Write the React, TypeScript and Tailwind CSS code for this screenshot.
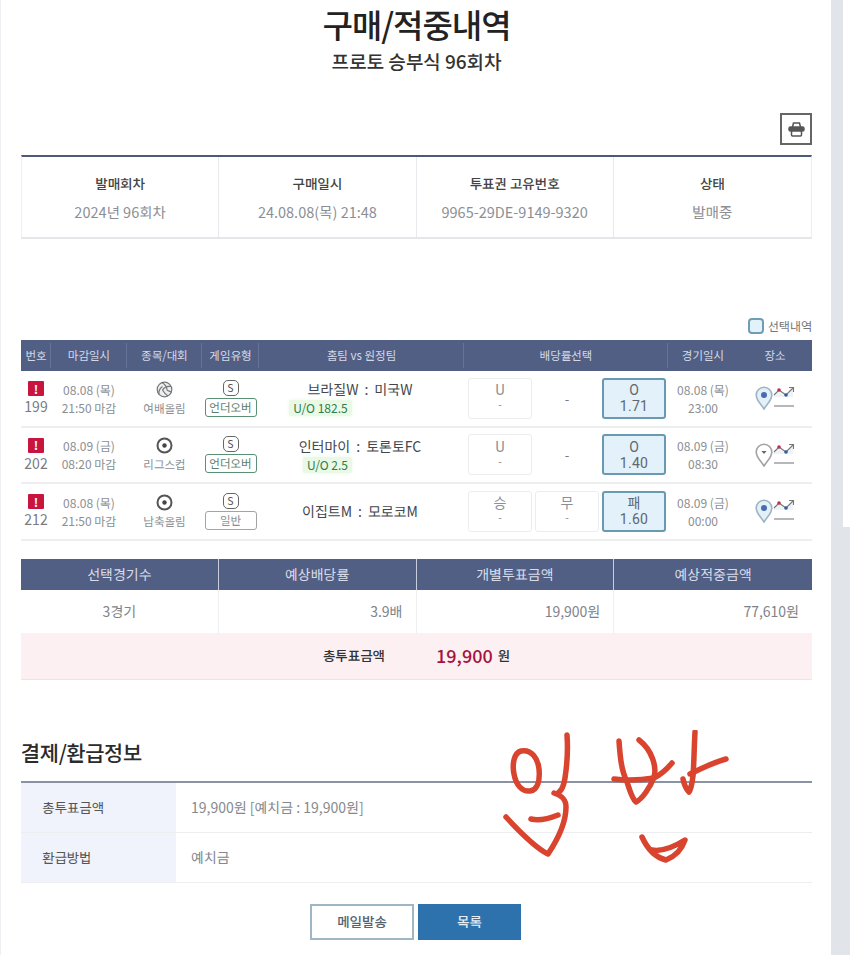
import { ReactNode } from "react";

const COLS = "grid grid-cols-[30px_76px_75px_57px_205px_204px_70px_74px]";
const KR = "font-['Noto_Sans_KR','Noto_Sans_CJK_KR','Noto_Sans',sans-serif]";

interface Game {
  no: number;
  closeDate: string;
  closeTime: string;
  league: string;
  ball: "volley" | "soccer";
  type: string;
  home: string;
  away: string;
  uo?: string;
  uoClass?: string;
  left: string;
  middle?: string;
  pick: string;
  odds: string;
  gameDate: string;
  gameTime: string;
  pinOn: boolean;
}

const games: Game[] = [
  { no: 199, closeDate: "08.08 (목)", closeTime: "21:50 마감", league: "여배올림", ball: "volley", type: "언더오버", home: "브라질W", away: "미국W", uo: "U/O 182.5", uoClass: "ml-[-82px]", left: "U", pick: "O", odds: "1.71", gameDate: "08.08 (목)", gameTime: "23:00", pinOn: true },
  { no: 202, closeDate: "08.09 (금)", closeTime: "08:20 마감", league: "리그스컵", ball: "soccer", type: "언더오버", home: "인터마이", away: "토론토FC", uo: "U/O 2.5", uoClass: "ml-[-68px]", left: "U", pick: "O", odds: "1.40", gameDate: "08.09 (금)", gameTime: "08:30", pinOn: false },
  { no: 212, closeDate: "08.08 (목)", closeTime: "21:50 마감", league: "남축올림", ball: "soccer", type: "일반", home: "이집트M", away: "모로코M", left: "승", middle: "무", pick: "패", odds: "1.60", gameDate: "08.09 (금)", gameTime: "00:00", pinOn: true },
];

function BallIcon({ kind }: { kind: "volley" | "soccer" }) {
  if (kind === "soccer") {
    return (
      <svg width="17" height="17" viewBox="0 0 17 17" fill="none">
        <circle cx="8.5" cy="8.5" r="7" stroke="#555" strokeWidth="2" />
        <circle cx="8.5" cy="8.5" r="2.2" fill="#444" />
      </svg>
    );
  }
  return (
    <svg width="17" height="17" viewBox="0 0 17 17" fill="#eceef0" stroke="#777" strokeWidth="1.2">
      <circle cx="8.5" cy="8.5" r="7.3" />
      <path fill="none" d="M6 1.800c3 1.500 5 4 5 7.500M15 5.500c-3-.5-6.500 .5-8.500 3.500M3 13.500c-.5-3 .5-6 3.500-8" />
      <path fill="none" d="M11 9.300c2 1 3.500 1.500 4.500 1.500M6.500 9c1.500 2.500 3 4.500 5.500 6" />
    </svg>
  );
}

function PinIcon({ on }: { on: boolean }) {
  return (
    <svg width="18" height="24" viewBox="0 0 18 24" fill="none">
      <path d="M9 23 C6 18 1.200 14.500 1.200 9 a7.800 7.800 0 0 1 15.600 0 C16.800 14.500 12 18 9 23Z" fill={on ? "#e3f0f8" : "#fff"} stroke={on ? "#9db4c2" : "#a3a3a3"} strokeWidth="1.600" />
      {on ? <circle cx="9" cy="9" r="3" fill="#4a6bb0" /> : <path d="M6.500 8h5L9 11z" fill="#666" />}
    </svg>
  );
}

function ChartIcon() {
  return (
    <svg width="22" height="24" viewBox="0 0 22 24" fill="none">
      <path d="M1 9 6 4l7 5 7-7v9H1z" fill="#eef3f8" />
      <path d="M1 9 6 4l7 5 7-7" stroke="#777" strokeWidth="1.100" />
      <path d="M16 1.500h4.500V6" stroke="#777" strokeWidth="1.100" />
      <circle cx="6" cy="4" r="1.800" fill="#c0304a" />
      <circle cx="13" cy="9" r="1.800" fill="#2f5d9c" />
      <path d="M1 20h20" stroke="#999" strokeWidth="1.400" />
    </svg>
  );
}

function HeaderCell({ children, divider = true }: { children: ReactNode; divider?: boolean }) {
  return (
    <div className="flex h-full items-center justify-center text-[11.500px] text-[#d4d9e6] relative">
      {children}
      {divider && <span className="absolute right-0 top-[3px] bottom-[3px] w-px bg-[#65739a]" />}
    </div>
  );
}

function OddsBox({ top, bottom, selected }: { top: string; bottom: string; selected?: boolean }) {
  return (
    <div
      className={`flex h-[41px] w-[64px] flex-col items-center justify-center rounded-[3px] font-['Roboto','Noto_Sans_CJK_KR',sans-serif] leading-[16px] ${
        selected ? "border-2 border-[#6a9ab2] bg-[#e3f1fb] text-[#60676f]" : "border border-[#ebedef] bg-white text-[#8a8f95]"
      }`}
    >
      <span className="text-[14px]">{top}</span>
      <span className={selected ? "text-[14px] tracking-[0.3px]" : "text-[11px]"}>{bottom}</span>
    </div>
  );
}

function GameRow({ game }: { game: Game }) {
  return (
    <div className={`${COLS} h-[56.500px] items-center border-b-2 border-[#eceef0] text-[#8b8f94]`}>
      <div className="flex flex-col items-center">
        <span className="flex h-[15px] w-[16px] items-center justify-center rounded-[1px] bg-[#c8143f] text-[12px] leading-none font-bold text-white">!</span>
        <span className="mt-[2px] text-[14px] leading-[17px] text-[#777b80]">{game.no}</span>
      </div>
      <div className="flex flex-col items-center text-[12px] leading-[18px] pt-[1px]">
        <span>{game.closeDate}</span>
        <span>{game.closeTime}</span>
      </div>
      <div className="flex flex-col items-center gap-[2px] text-[11.500px] leading-[16px]">
        <BallIcon kind={game.ball} />
        <span>{game.league}</span>
      </div>
      <div className="flex flex-col items-center">
        <span className="flex h-[16px] w-[16px] items-center justify-center rounded-[5px] border border-[#666] text-[10.500px] leading-none text-[#555]">S</span>
        <span
          className={`mt-[2px] flex h-[19px] w-[52px] items-center justify-center rounded-[3px] border-[1.500px] text-[11.500px] ${
            game.type === "일반" ? "border-[#a3a3a3] text-[#8b8f94]" : "border-[#5b9075] text-[#5c7f6c]"
          }`}
        >
          {game.type}
        </span>
      </div>
      <div className="flex flex-col items-center">
        <span className="-ml-[3px] flex gap-[6px] text-[14px] leading-[19px] text-[#44484d] whitespace-nowrap">
          <span>{game.home}</span>
          <span>:</span>
          <span>{game.away}</span>
        </span>
        {game.uo && (
          <span className={`mt-[1px] rounded-[2px] bg-[#e9f9e6] px-[4px] text-[12px] leading-[16px] text-[#2f7d4e] shadow-[0_0_4px_#e9f9e6] ${game.uoClass}`}>{game.uo}</span>
        )}
      </div>
      <div className="flex items-center gap-[3px] pl-[4px]">
        <OddsBox top={game.left} bottom="-" />
        {game.middle ? (
          <OddsBox top={game.middle} bottom="-" />
        ) : (
          <span className="flex w-[64px] justify-center text-[13px] text-[#777]">-</span>
        )}
        <OddsBox top={game.pick} bottom={game.odds} selected />
      </div>
      <div className="flex flex-col items-center text-[12px] leading-[18px] pt-[1px]">
        <span>{game.gameDate}</span>
        <span>{game.gameTime}</span>
      </div>
      <div className="flex items-center justify-center">
        <PinIcon on={game.pinOn} />
        <ChartIcon />
      </div>
    </div>
  );
}

function InfoCell({ label, value, last }: { label: string; value: string; last?: boolean }) {
  return (
    <div className={`flex flex-col items-center pt-[17px] ${last ? "" : "border-r border-[#e7e9ec]"}`}>
      <span className="text-[13.500px] leading-[18px] font-medium text-[#444]">{label}</span>
      <span className="mt-[11px] text-[14.500px] leading-[18px] text-[#8b8f94]">{value}</span>
    </div>
  );
}

function PrinterIcon() {
  return (
    <svg width="17" height="15" viewBox="0 0 17 15" fill="none" stroke="#555" strokeWidth="1.500">
      <path d="M4.500 5 5.500 1h6l1 4" />
      <rect x="1" y="5" width="15" height="4" rx="1.500" fill="#555" />
      <rect x="3.500" y="9" width="10" height="5" rx="1" fill="#fff" />
    </svg>
  );
}

function Handwriting() {
  return (
    <svg
      className="pointer-events-none absolute left-[490px] top-[730px]"
      width="250"
      height="140"
      viewBox="0 0 250 140"
      fill="none"
      stroke="#d9442f"
      strokeLinecap="round"
      strokeLinejoin="round"
      strokeWidth="5.500"
    >
      <path d="M31 21C24 23 22 34 24 44c2 11 8 18 16 17 8-1 10-11 9-22-1-10-7-20-18-18z" />
      <path d="M77 5c1 14 0 30-2 43-1 6-3 12-6 14" />
      <path d="M64 63c6 2 12 5 12 14 0 16-8 32-18 47-12-6-30-24-42-37" />
      <path d="M41 89c8 2 17 0 27-4" />
      <path d="M129 11c1 14 2 29 8 41 3 9 5 17 9 20 6-3 14-14 18-25 3-10-2-27-15-37" />
      <path d="M124 49c14 2 28 1 40-1 6-3 13-9 18-15" />
      <path d="M205 2c-1 18-1 32-2 44-1 8-3 15-4 16-3-3-5-8-6-13" />
      <path d="M200 44c10-5 22-11 36-15" />
      <path d="M152 107c5 11 12 20 24 23 10-4 16-11 19-20-8 5-22 12-33 10" />
    </svg>
  );
}

export default function App() {
  return (
    <div className={`relative h-[955px] w-[850px] overflow-hidden bg-[#e1e5ea] ${KR}`}>
      <div className="absolute right-0 top-0 h-[527px] w-[7px] bg-white" />
      <div className="relative h-full w-[831px] border-l border-[#eceef1] bg-white pl-[20px] pr-[19px]">
        <h1 className="pt-[3px] text-center text-[33px] leading-[42px] font-medium tracking-[-1px] text-[#222]">구매/적중내역</h1>
        <p className="mt-[3px] text-center text-[19px] leading-[26px] font-medium text-[#333]">프로토 승부식 96회차</p>

        <div className="mt-[39px] flex justify-end">
          <button className="flex h-[32px] w-[32px] items-center justify-center border-2 border-[#666] bg-white">
            <PrinterIcon />
          </button>
        </div>

        <div className="mt-[10px] grid h-[84px] grid-cols-4 border-x border-b-2 border-x-[#eceef0] border-b-[#e4e6e9] border-t-2 border-t-[#4b5a78]">
          <InfoCell label="발매회차" value="2024년 96회차" />
          <InfoCell label="구매일시" value="24.08.08(목) 21:48" />
          <InfoCell label="투표권 고유번호" value="9965-29DE-9149-9320" />
          <InfoCell label="상태" value="발매중" last />
        </div>

        <div className="mt-[78px] flex h-[18px] items-center justify-end gap-[4px]">
          <span className="h-[16px] w-[16px] rounded-[4px] border-2 border-[#6f9db5] bg-[#e3f1fb]" />
          <span className="text-[12px] text-[#777]">선택내역</span>
        </div>

        <div className={`${COLS} mt-[5px] h-[31px] bg-[#515f85]`}>
          <HeaderCell>번호</HeaderCell>
          <HeaderCell>마감일시</HeaderCell>
          <HeaderCell>종목/대회</HeaderCell>
          <HeaderCell>게임유형</HeaderCell>
          <HeaderCell>홈팀 vs 원정팀</HeaderCell>
          <HeaderCell>배당률선택</HeaderCell>
          <HeaderCell divider={false}>경기일시</HeaderCell>
          <HeaderCell divider={false}>장소</HeaderCell>
        </div>
        {games.map((game) => (
          <GameRow key={game.no} game={game} />
        ))}

        <div className="mt-[18px] grid grid-cols-4 text-[14px]">
          {["선택경기수", "예상배당률", "개별투표금액", "예상적중금액"].map((h, i) => (
            <div key={h} className={`flex h-[31px] items-center justify-center bg-[#515f85] text-[#d8dce8] ${i < 3 ? "border-r border-[#c8cedd]" : ""}`}>
              {h}
            </div>
          ))}
          <div className="flex h-[43px] items-center justify-center border-r border-[#eceef0] text-[#7f8388]">3경기</div>
          <div className="flex h-[43px] items-center justify-end border-r border-[#eceef0] pr-[13px] text-[#7f8388]">3.9배</div>
          <div className="flex h-[43px] items-center justify-end border-r border-[#eceef0] pr-[13px] text-[#7f8388]">19,900원</div>
          <div className="flex h-[43px] items-center justify-end pr-[13px] text-[#7f8388]">77,610원</div>
        </div>
        <div className="flex h-[47px] items-center justify-center border-b border-[#e9e6e8] bg-[#fcf0f2]">
          <span className="text-[13.500px] font-medium text-[#333]">총투표금액</span>
          <span className="ml-[51px] text-[18px] font-medium text-[#a5123f]">19,900</span>
          <span className="ml-[5px] text-[13.500px] font-medium text-[#333]">원</span>
        </div>

        <h2 className="mt-[57px] text-[21px] leading-[30px] font-medium tracking-[-0.5px] text-[#2b2b2b]">결제/환급정보</h2>
        <div className="mt-[14px] border-t-2 border-[#8a92a3] text-[14px]">
          <div className="flex h-[50px] border-b border-[#eceef0]">
            <div className="flex w-[155px] items-center bg-[#f0f3fb] pl-[21px] text-[13.500px] text-[#555]">총투표금액</div>
            <div className="flex items-center pl-[15px] text-[#85898e]">19,900원 [예치금 : 19,900원]</div>
          </div>
          <div className="flex h-[50px] border-b border-[#eceef0]">
            <div className="flex w-[155px] items-center bg-[#f0f3fb] pl-[21px] text-[13.500px] text-[#555]">환급방법</div>
            <div className="flex items-center pl-[15px] text-[#85898e]">예치금</div>
          </div>
        </div>

        <div className="mt-[21px] -ml-[2px] flex justify-center gap-[4px] text-[13.500px] font-medium">
          <button className="h-[36px] w-[104px] border-2 border-[#9fb7c4] bg-white text-[#55636f]">메일발송</button>
          <button className="h-[36px] w-[103px] bg-[#2d72ad] text-[#e4eef6]">목록</button>
        </div>
      </div>
      <Handwriting />
    </div>
  );
}
